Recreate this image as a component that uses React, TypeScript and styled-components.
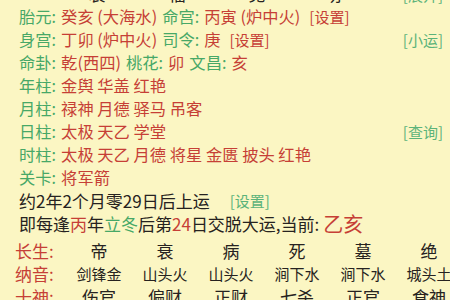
import React from "react";
import styled, { createGlobalStyle } from "styled-components";

const GlobalStyle = createGlobalStyle`
  html, body {
    margin: 0;
    padding: 0;
    background: #fbf6c3;
    overflow: hidden;
  }
  body {
    font-family: "Noto Sans CJK SC", "Noto Sans", sans-serif;
  }
`;

const GREEN = "#47a867";
const RED = "#c63f36";
const INK = "#262220";

const Page = styled.div`
  width: 450px;
  height: 300px;
  overflow: hidden;
  background: #fbf6c3;
`;

const Info = styled.div`
  margin-top: -18px;
  padding: 0 7px 0 19px;
  display: flex;
  flex-direction: column;
  font-size: 16.3px;
  line-height: 23px;
`;

const Line = styled.div`
  display: flex;
  align-items: center;
  height: 23px;
  white-space: nowrap;
`;

const Left = styled.div`
  flex: 1;
  display: flex;
  align-items: center;
  gap: 5px;
`;

const Label = styled.span`
  color: ${GREEN};
`;

const Value = styled.span<{ $tone?: "red" | "green" | "ink" }>`
  color: ${(p) => (p.$tone === "green" ? GREEN : p.$tone === "ink" ? INK : RED)};
`;

const Link = styled.span<{ $tone?: "red" | "green" }>`
  color: ${(p) => (p.$tone === "green" ? "#5bb37a" : RED)};
  font-size: 15px;
  margin-left: 4px;
`;

const SideLink = styled.span`
  color: #5bb37a;
  font-size: 15px;
`;

const HeadRow = styled.div`
  display: grid;
  grid-template-columns: 38px repeat(4, 80px) 1fr;
  height: 23px;
  color: ${INK};
  font-size: 17px;
`;

const HeadCell = styled.span`
  text-align: center;
`;

const HeadEnd = styled.span`
  text-align: right;
`;

const Plain = styled.div<{ $gap?: number }>`
  color: ${INK};
  font-size: 17px;
  display: flex;
  align-items: center;
  gap: ${(p) => p.$gap ?? 0}px;
`;

const Current = styled.span`
  color: ${RED};
  font-size: 20px;
  margin-left: 4px;
`;

const Table = styled.div`
  margin-top: 4px;
  padding-left: 15px;
  display: grid;
  grid-template-columns: 51px repeat(6, 66px);
  grid-auto-rows: 23px;
  line-height: 23px;
  white-space: nowrap;
`;

const RowLabel = styled.span`
  color: ${RED};
  font-size: 17px;
`;

const Cell = styled.span<{ $big?: boolean }>`
  color: ${INK};
  text-align: center;
  font-size: ${(p) => (p.$big ? "17px" : "15px")};
`;

const shensha: [string, string][] = [
  ["年柱", "金舆 华盖 红艳"],
  ["月柱", "禄神 月德 驿马 吊客"],
];

const table = [
  { label: "长生", big: true, cells: ["帝", "衰", "病", "死", "墓", "绝"] },
  { label: "纳音", big: false, cells: ["剑锋金", "山头火", "山头火", "涧下水", "涧下水", "城头土"] },
  { label: "十神", big: true, cells: ["伤官", "偏财", "正财", "七杀", "正官", "食神"] },
];

export default function App() {
  return (
    <Page>
      <GlobalStyle />
      <Info>
        <HeadRow>
          <span />
          <HeadCell>衰</HeadCell>
          <HeadCell>福</HeadCell>
          <HeadCell>见</HeadCell>
          <HeadCell>亦</HeadCell>
          <HeadEnd>
            <SideLink>[展开]</SideLink>
          </HeadEnd>
        </HeadRow>
        <Line>
          <Left>
            <Label>胎元:</Label>
            <Value>癸亥 (大海水)</Value>
            <Label>命宫:</Label>
            <Value>丙寅 (炉中火)</Value>
            <Link>[设置]</Link>
          </Left>
        </Line>
        <Line>
          <Left>
            <Label>身宫:</Label>
            <Value>丁卯 (炉中火)</Value>
            <Label>司令:</Label>
            <Value>庚</Value>
            <Link>[设置]</Link>
          </Left>
          <SideLink>[小运]</SideLink>
        </Line>
        <Line>
          <Left>
            <Label>命卦:</Label>
            <Value>乾(西四)</Value>
            <Label>桃花:</Label>
            <Value>卯</Value>
            <Label>文昌:</Label>
            <Value>亥</Value>
          </Left>
        </Line>
        {shensha.map(([k, v]) => (
          <Line key={k}>
            <Left>
              <Label>{k}:</Label>
              <Value>{v}</Value>
            </Left>
          </Line>
        ))}
        <Line>
          <Left>
            <Label>日柱:</Label>
            <Value>太极 天乙 学堂</Value>
          </Left>
          <SideLink>[查询]</SideLink>
        </Line>
        <Line>
          <Left>
            <Label>时柱:</Label>
            <Value>太极 天乙 月德 将星 金匮 披头 红艳</Value>
          </Left>
        </Line>
        <Line>
          <Left>
            <Label>关卡:</Label>
            <Value>将军箭</Value>
          </Left>
        </Line>
        <Line>
          <Plain $gap={16}>
            <span>约2年2个月零29日后上运</span>
            <Link $tone="green">[设置]</Link>
          </Plain>
        </Line>
        <Line>
          <Plain>
            <span>
              即每逢<Value>丙</Value>年<Value $tone="green">立冬</Value>后第
              <Value>24</Value>日交脱大运,当前:
            </span>
            <Current>乙亥</Current>
          </Plain>
        </Line>
      </Info>
      <Table>
        {table.map((row) => (
          <React.Fragment key={row.label}>
            <RowLabel>{row.label}:</RowLabel>
            {row.cells.map((c, i) => (
              <Cell key={i} $big={row.big}>
                {c}
              </Cell>
            ))}
          </React.Fragment>
        ))}
      </Table>
    </Page>
  );
}
